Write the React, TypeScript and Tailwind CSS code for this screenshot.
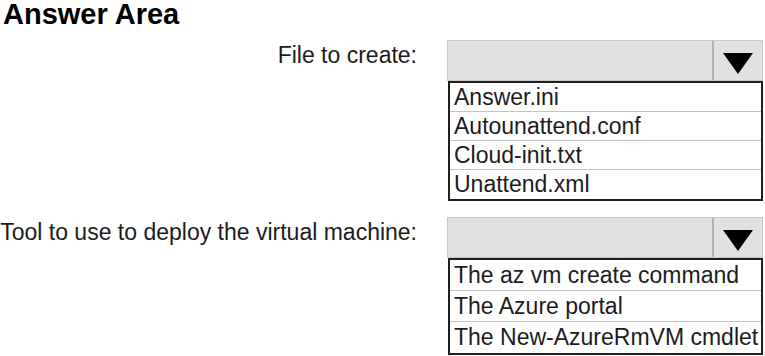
import React from "react";

function Dropdown({ items, rowH }: { items: string[]; rowH: string }) {
  return (
    <div className="flex flex-col w-[316px]">
      <div className="flex h-[41px] bg-[#e1e1e1] border border-[#c9c9c9]">
        <div className="flex-1" />
        <div className="w-[50px] border-l-2 border-[#b4b4b4] flex justify-center pt-[12px]">
          <svg width="30" height="21" viewBox="0 0 30 21">
            <polygon points="0,0 30,0 15,21" fill="#000" />
          </svg>
        </div>
      </div>
      <div className="ml-[1px] w-[315px] border-2 border-[#1e1e1e] bg-white">
        {items.map((t, i) => (
          <div
            key={t}
            className={`${rowH} pl-[4px] text-[23px] leading-[28px] whitespace-nowrap text-[#1c1c1c] ${
              i < items.length - 1 ? "border-b border-[#c4c4c4]" : ""
            }`}
          >
            {t}
          </div>
        ))}
      </div>
    </div>
  );
}

export default function App() {
  return (
    <div
      className="w-[765px] h-[356px] bg-white overflow-hidden"
      style={{ fontFamily: '"Liberation Sans", Arial, sans-serif' }}
    >
      <div className="h-[40px] pl-[3px] text-[29px] leading-none font-bold text-black">
        Answer Area
      </div>
      <div className="grid grid-cols-[417px_316px] gap-x-[30px] gap-y-[16px]">
        <div className="text-right pt-[4px] text-[23px] leading-[23px] whitespace-nowrap text-[#1c1c1c]">
          File to create:
        </div>
        <Dropdown
          items={["Answer.ini", "Autounattend.conf", "Cloud-init.txt", "Unattend.xml"]}
          rowH="h-[29px]"
        />
        <div className="text-right pt-[4px] text-[23px] leading-[23px] whitespace-nowrap text-[#1c1c1c]">
          Tool to use to deploy the virtual machine:
        </div>
        <Dropdown
          items={["The az vm create command", "The Azure portal", "The New-AzureRmVM cmdlet"]}
          rowH="h-[31px] pt-[1px]"
        />
      </div>
    </div>
  );
}
